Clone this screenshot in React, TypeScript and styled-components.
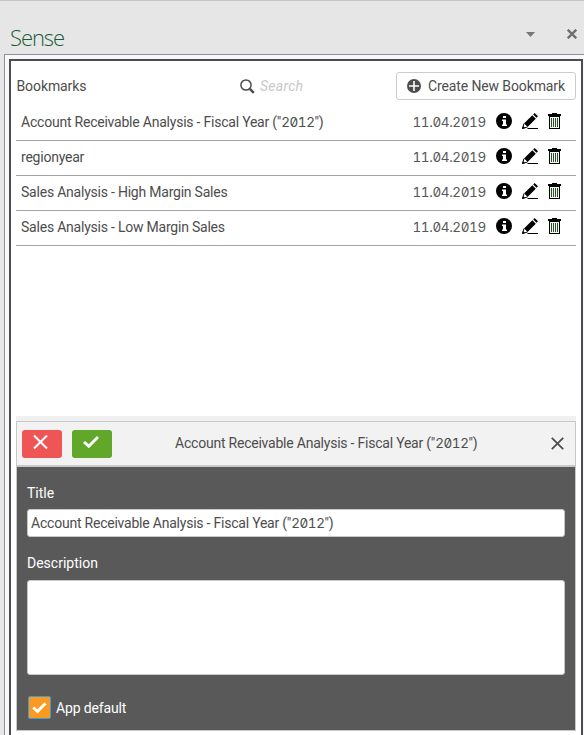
import React from "react";
import styled, { createGlobalStyle } from "styled-components";

const GlobalStyle = createGlobalStyle`
  * { box-sizing: border-box; }
  html, body { margin: 0; background: #e6e6e6; overflow: hidden; }
  body { font-family: Roboto, "Liberation Sans", sans-serif; font-size: 14px; line-height: 20px; color: #4d4d4d; }
`;

const Pane = styled.div`
  width: 584px;
  height: 735px;
  display: flex;
  flex-direction: column;
  background: #e6e6e6;
  border-top: 1px solid #c6c6c6;
  overflow: hidden;
`;

const TitleBar = styled.header`
  height: 53px;
  flex: none;
  display: flex;
  align-items: flex-start;
  padding: 0 7px 0 10px;
`;

const PaneTitle = styled.h1`
  flex: 1;
  margin: 20px 0 0;
  font: 300 22px/32px "Open Sans", sans-serif;
  letter-spacing: -1.1px;
  color: #185c37;
`;

const PaneMenu = styled.svg`
  width: 9px;
  height: 5px;
  margin: 31px 32px 0 0;
  fill: #777;
`;

const PaneClose = styled.svg`
  width: 10px;
  height: 10px;
  margin-top: 28px;
  stroke: #707070;
  stroke-width: 2.4;
`;

const Dock = styled.div`
  flex: 1;
  min-height: 0;
  margin-left: 4px;
  padding: 4px 1px 0 4px;
  background: #f8f8fa;
  border: solid #8f8f98;
  border-width: 1px 0 0 1px;
`;

const Content = styled.main`
  height: 100%;
  display: flex;
  flex-direction: column;
  padding: 11px 5px 4px;
  background: #fff;
  border: solid #4c4c4c;
  border-width: 2px 2px 0;
`;

const Toolbar = styled.div`
  display: flex;
  align-items: center;
  height: 28px;
  flex: none;
`;

const Heading = styled.span`
  width: 224px;
  padding-left: 0.5px;
  letter-spacing: -0.1px;
`;

const Search = styled.label`
  flex: 1;
  display: flex;
  align-items: center;
  gap: 5px;
  color: #c8c8c8;
  font-style: italic;
  letter-spacing: 0.25px;
`;

const CreateButton = styled.button`
  width: 180px;
  height: 28px;
  display: flex;
  align-items: center;
  gap: 7px;
  padding: 0 0 0 10px;
  background: #fff;
  border: 1px solid #ccc;
  border-radius: 3px;
  color: #4d4d4d;
  font: inherit;
  letter-spacing: -0.12px;
  white-space: nowrap;
`;

const List = styled.ul`
  flex: 1;
  margin: 6px 0 0;
  padding: 0;
  list-style: none;
`;

const Row = styled.li`
  height: 35px;
  display: flex;
  align-items: center;
  padding: 0 15px 2px 5px;
  border-bottom: 1px solid #a3a3a3;
`;

const Label = styled.span`
  letter-spacing: -0.22px;
  white-space: pre;
`;

const Name = styled(Label)`
  flex: 1;
`;

const Digits = styled.span`
  font-family: Inter, sans-serif;
  font-size: 13.5px;
  font-feature-settings: "zero", "tnum";
  letter-spacing: -0.4px;
`;

const Stamp = styled(Digits)`
  width: 83.5px;
  color: #595959;
`;

const RowIcon = styled.svg`
  width: 16px;
  height: 16px;
  margin: -2px 10px 0 0;
  flex: none;
  &:last-child { width: 13px; margin-right: 0; }
`;

const Editor = styled.section`
  flex: none;
  border-top: 5px solid #f0f0f0;
`;

const EditorFrame = styled.div`
  height: 310px;
  display: flex;
  flex-direction: column;
  border: 1px solid #c8c8c8;
`;

const EditorBar = styled.div`
  height: 45px;
  flex: none;
  display: flex;
  align-items: center;
  padding: 0 11px 0 5px;
  background: #f2f2f2;
  border-bottom: 2px solid #c8c8c8;
  & > svg { margin-bottom: 1px; }
`;

const ActionButton = styled.button<{ $color: string }>`
  width: 40px;
  height: 28px;
  display: flex;
  justify-content: center;
  margin: 0 10px 0 0;
  padding: 4px 2px 0 0;
  border: 0;
  border-radius: 3px;
  background: ${(p) => p.$color};
`;

const EditorTitle = styled(Label)`
  flex: 1;
  padding: 0 0 1px 53px;
`;

const Form = styled.div`
  flex: 1;
  display: flex;
  flex-direction: column;
  padding: 16px 10px 0;
  background: #595959;
  color: #fff;
`;

const Field = styled.div<{ $height: number; $gap?: number }>`
  height: ${(p) => p.$height}px;
  flex: none;
  margin: ${(p) => p.$gap ?? 6}px 0 16px;
  padding: 3px 3px;
  background: #fff;
  border: 1px solid #c8c8c8;
  border-radius: 3px;
  color: #4d4d4d;
`;

const DefaultOption = styled.label`
  display: flex;
  align-items: center;
  gap: 5px;
  margin: 5px 0 0 1px;
  letter-spacing: -0.15px;
`;

const CheckBox = styled.span`
  width: 23px;
  height: 23px;
  display: grid;
  place-items: center;
  background: #fb9a20;
  border: 1px solid #469dcd;
  border-radius: 2px;
`;

const InfoIcon = () => (
  <RowIcon viewBox="0 0 16 16">
    <circle cx="8" cy="8" r="8" fill="#000" />
    <path d="M7 3h3v2H7zM6 6.5h4v5h1V13H6v-1.5h1V8H6z" fill="#fff" />
  </RowIcon>
);

const PencilIcon = () => (
  <RowIcon viewBox="0 0 16 16">
    <path d="M2 10.5 10.3 2.2 13.8 5.7 5.5 14zM11.2 1.4 12.6 0 16 3.2 14.5 4.7z" />
    <path d="M2 10.5 .5 15.5 5.5 14" fill="#fff" stroke="#000" strokeWidth="1" />
    <path d="M0 16 1 13 3 15zM6 15h10v1H5z" />
  </RowIcon>
);

const TrashIcon = () => (
  <RowIcon viewBox="0 0 13 16">
    <path d="M0 1h4V0h5v1h4v2H0zM1 3h11v13H1z" />
    <path d="M2 4h9v11H2z" fill="#effbe9" />
    <path d="M3.5 5v9M5.5 5v9M7.5 5v9M9.5 5v9" stroke="#2f4a35" />
  </RowIcon>
);

const bookmarks = [
  { name: "Account Receivable Analysis - Fiscal Year", year: "2012" },
  { name: "regionyear" },
  { name: "Sales Analysis - High Margin Sales" },
  { name: "Sales Analysis - Low Margin Sales" },
];

const BookmarkName = ({ name, year }: { name: string; year?: string }) => (
  <>
    {name}
    {year && <> ("<Digits>{year}</Digits>")</>}
  </>
);

export default function App() {
  const current = bookmarks[0];
  return (
    <Pane>
      <GlobalStyle />
      <TitleBar>
        <PaneTitle>Sense</PaneTitle>
        <PaneMenu viewBox="0 0 9 5"><path d="M0 0h9L4.5 5z" /></PaneMenu>
        <PaneClose viewBox="0 0 10 10"><path d="M.7.7 9.3 9.3M9.3.7.7 9.3" /></PaneClose>
      </TitleBar>
      <Dock>
        <Content>
          <Toolbar>
            <Heading>Bookmarks</Heading>
            <Search>
              <svg width="15" height="15" viewBox="0 0 15 15" fill="none" stroke="#4d4d4d">
                <circle cx="6" cy="6" r="5.1" strokeWidth="1.5" />
                <path d="M9.8 9.8 13.8 13.8" strokeWidth="2.5" />
              </svg>
              Search
            </Search>
            <CreateButton>
              <svg width="14" height="14" viewBox="0 0 14 14">
                <circle cx="7" cy="7" r="7" fill="#4d4d4d" />
                <path d="M7 2v10M2 7h10" stroke="#fff" strokeWidth="1.6" />
              </svg>
              Create New Bookmark
            </CreateButton>
          </Toolbar>
          <List>
            {bookmarks.map((b) => (
              <Row key={b.name}>
                <Name><BookmarkName {...b} /></Name>
                <Stamp>11.04.2019</Stamp>
                <InfoIcon />
                <PencilIcon />
                <TrashIcon />
              </Row>
            ))}
          </List>
          <Editor>
            <EditorFrame>
              <EditorBar>
                <ActionButton $color="#f05555" aria-label="Cancel">
                  <svg width="16" height="16" viewBox="0 0 16 16" stroke="#fff" strokeWidth="2.1">
                    <path d="M1 1.5 14 14.5M14 1.5 1 14.5" />
                  </svg>
                </ActionButton>
                <ActionButton $color="#61a729" aria-label="Save">
                  <svg width="16" height="16" viewBox="0 0 16 16" fill="none" stroke="#fff" strokeWidth="3">
                    <path d="M1 8 5.8 12.3 15 3" />
                  </svg>
                </ActionButton>
                <EditorTitle><BookmarkName {...current} /></EditorTitle>
                <svg width="13" height="13" viewBox="0 0 13 13" stroke="#4d4d4d" strokeWidth="1.8">
                  <path d="M.8.8 12.2 12.2M12.2.8.8 12.2" />
                </svg>
              </EditorBar>
              <Form>
                <span>Title</span>
                <Field $height={28}><Label><BookmarkName {...current} /></Label></Field>
                <span>Description</span>
                <Field $height={95} $gap={7} />
                <DefaultOption>
                  <CheckBox>
                    <svg width="15" height="15" viewBox="0 0 15 15" fill="none" stroke="#fff" strokeWidth="3">
                      <path d="M1.3 7.5 5.5 11.5 13.5 3.2" />
                    </svg>
                  </CheckBox>
                  App default
                </DefaultOption>
              </Form>
            </EditorFrame>
          </Editor>
        </Content>
      </Dock>
    </Pane>
  );
}
